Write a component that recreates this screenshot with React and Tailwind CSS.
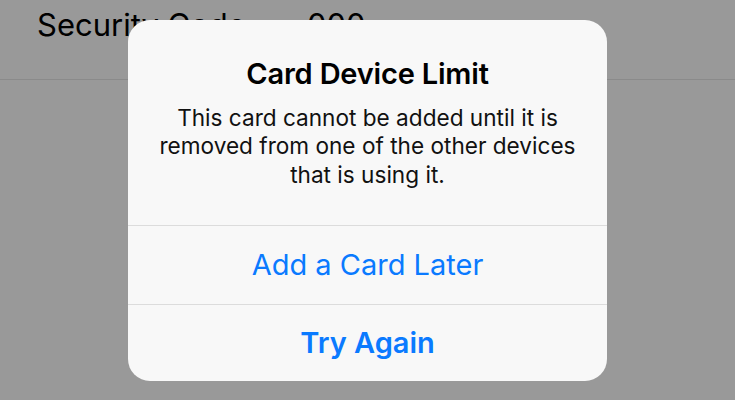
export default function App() {
  const font = { fontFamily: "Inter, 'Noto Sans', sans-serif" };
  return (
    <div className="relative w-[735px] h-[400px] overflow-hidden bg-[#999999]" style={font}>
      <div className="h-[80px] border-b border-[#8a8a8a] flex items-start pt-[6px] pl-[37px] text-[31px] leading-[37px] text-black">
        <span className="w-[270px]">Security Code</span>
        <span>000</span>
      </div>
      <div className="absolute inset-0 flex items-center justify-center">
        <div className="w-[479px] h-[361px] rounded-[22px] bg-[#f8f8f8] flex flex-col overflow-hidden">
          <div className="h-[206px] flex flex-col items-center pt-[36px] px-[20px] border-b border-[#dcdcdc]">
            <div className="text-[29px] leading-[35px] font-semibold text-black tracking-[-0.2px]">Card Device Limit</div>
            <div className="mt-[13px] text-[22.6px] leading-[28.5px] text-center text-[#111]">
              This card cannot be added until it is<br />removed from one of the other devices<br />that is using it.
            </div>
          </div>
          <div className="h-[79px] flex items-center justify-center border-b border-[#dcdcdc] text-[29px] text-[#0a7aff]">
            Add a Card Later
          </div>
          <div className="flex-1 flex items-center justify-center text-[29px] font-semibold text-[#0a7aff]">
            Try Again
          </div>
        </div>
      </div>
    </div>
  );
}
